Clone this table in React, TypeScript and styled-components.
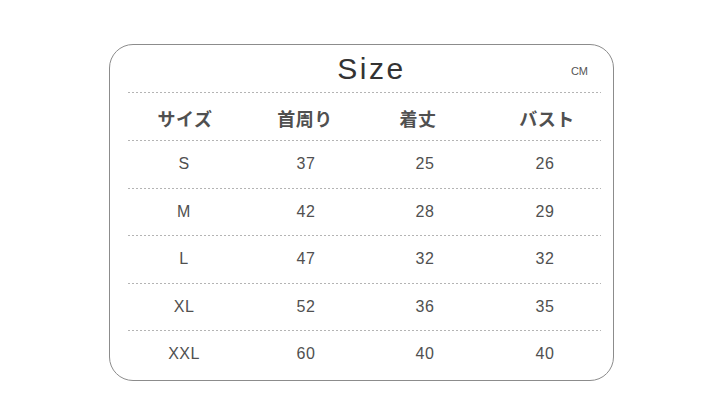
import styled, { createGlobalStyle } from "styled-components";

const GlobalStyle = createGlobalStyle`
  html, body {
    margin: 0;
    padding: 0;
    background: #ffffff;
  }
  body {
    font-family: "Liberation Sans", Arial, sans-serif;
  }
`;

const Page = styled.div`
  width: 720px;
  height: 403px;
  padding: 44px 0 0 109px;
  box-sizing: border-box;
`;

const Card = styled.div`
  width: 505px;
  height: 337px;
  box-sizing: border-box;
  border: 1px solid #8c8c8c;
  border-radius: 24px;
  padding: 0 12px 0 18px;
  display: flex;
  flex-direction: column;
`;

const TitleRow = styled.div`
  height: 47px;
  display: grid;
  grid-template-columns: 1fr auto 1fr;
  align-items: center;
`;

const Title = styled.h1`
  grid-column: 2;
  margin: 0 0 0 14px;
  font-family: "Liberation Sans", Arial, sans-serif;
  font-weight: 400;
  font-size: 30px;
  line-height: 1;
  letter-spacing: 2.5px;
  color: #333;
`;

const Unit = styled.span`
  grid-column: 3;
  justify-self: end;
  margin: 5px 13px 0 0;
  font-size: 11px;
  color: #555;
`;

const Divider = styled.div`
  height: 1px;
  width: 473px;
  background-image: linear-gradient(to right, #b4b4b4 50%, transparent 50%);
  background-size: 4px 1px;
`;

const Row = styled.div<{ $head?: boolean }>`
  height: ${(p) => (p.$head ? "47px" : "46.5px")};
  display: grid;
  grid-template-columns: 112px 132px 106px 134px;
  align-items: center;
  padding-top: ${(p) => (p.$head ? "2px" : "0")};
  box-sizing: border-box;
`;

const HeadCell = styled.div<{ $shift?: number }>`
  text-align: center;
  font-family: "Noto Sans CJK JP", sans-serif;
  font-weight: 700;
  font-size: 18px;
  letter-spacing: 0.5px;
  color: #505050;
  transform: translateX(${(p) => p.$shift ?? 0}px);
`;

const Cell = styled.div`
  text-align: center;
  font-size: 16px;
  letter-spacing: 0.5px;
  color: #505050;
`;

const headers: { label: string; shift: number }[] = [
  { label: "サイズ", shift: 1 },
  { label: "首周り", shift: -1 },
  { label: "着丈", shift: -7 },
  { label: "バスト", shift: 2 },
];

const rows: string[][] = [
  ["S", "37", "25", "26"],
  ["M", "42", "28", "29"],
  ["L", "47", "32", "32"],
  ["XL", "52", "36", "35"],
  ["XXL", "60", "40", "40"],
];

export default function App() {
  return (
    <>
      <GlobalStyle />
      <Page>
        <Card>
          <TitleRow>
            <Title>Size</Title>
            <Unit>CM</Unit>
          </TitleRow>
          <Divider />
          <Row $head>
            {headers.map((h) => (
              <HeadCell key={h.label} $shift={h.shift}>
                {h.label}
              </HeadCell>
            ))}
          </Row>
          {rows.map((r) => (
            <div key={r[0]}>
              <Divider />
              <Row>
                {r.map((v, i) => (
                  <Cell key={i}>{v}</Cell>
                ))}
              </Row>
            </div>
          ))}
        </Card>
      </Page>
    </>
  );
}
